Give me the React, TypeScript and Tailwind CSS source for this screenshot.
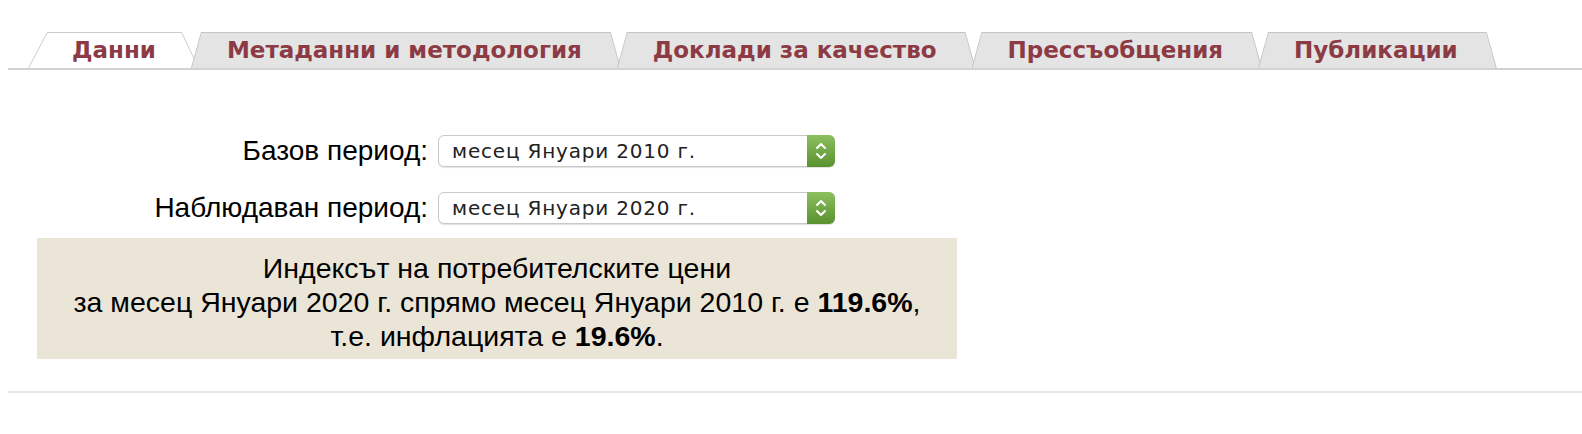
import React from 'react';

const tabs = [
  { label: 'Данни', active: true },
  { label: 'Метаданни и методология', active: false },
  { label: 'Доклади за качество', active: false },
  { label: 'Прессъобщения', active: false },
  { label: 'Публикации', active: false },
];

function Tab({ label, active, first, second }: { label: string; active: boolean; first: boolean; second: boolean }) {
  const margin = first ? 'ml-[20px]' : second ? '-ml-[8px]' : '-ml-[4px]';
  if (active) {
    return (
      <div className={`relative flex h-[36px] items-center pl-[44px] pr-[43px] ${margin}`}>
        <span className="absolute inset-0 bg-[#cdcdcd] [clip-path:polygon(0_100%,19px_0,calc(100%_-_17px)_0,100%_100%)]" />
        <span className="absolute inset-0 bg-white [clip-path:polygon(1px_100%,19.5px_1px,calc(100%_-_17.5px)_1px,calc(100%_-_1px)_100%)]" />
        <span className="relative">{label}</span>
      </div>
    );
  }
  return (
    <div className={`relative flex h-[36px] items-center pl-[36px] pr-[39px] ${margin}`}>
      <span className="absolute inset-0 bg-[#c4c4c4] [clip-path:polygon(0_100%,10px_0,calc(100%_-_10px)_0,100%_100%)]" />
      <span className="absolute inset-0 bg-[#e4e4e4] [clip-path:polygon(1px_100%,10.5px_1px,calc(100%_-_10.5px)_1px,calc(100%_-_1px)_100%)]" />
      <span className="relative">{label}</span>
    </div>
  );
}

function FakeSelect({ value }: { value: string }) {
  return (
    <div className="flex h-[32px] w-[397px] items-stretch rounded-[6px] border border-[#c9c9c9] bg-white shadow-[0_1px_1px_rgba(0,0,0,0.12)]">
      <div className="flex flex-1 items-center pl-[13px] font-['DejaVu_Sans',Verdana,sans-serif] text-[20px] tracking-[0.8px] text-[#222]">
        {value}
      </div>
      <div className="-my-px -mr-px flex w-[28px] items-center justify-center rounded-r-[6px] bg-gradient-to-b from-[#8cc05f] to-[#5a922f]">
        <svg width="12" height="20" viewBox="0 0 12 20" fill="none" stroke="white" strokeWidth="2" strokeLinecap="round" strokeLinejoin="round">
          <polyline points="2,7 6,3 10,7" />
          <polyline points="2,13 6,17 10,13" />
        </svg>
      </div>
    </div>
  );
}

export default function App() {
  return (
    <div className="min-h-[434px] w-full bg-white pt-[32px] font-['Liberation_Sans',Arial,sans-serif] text-black">
      {/* Tabs */}
      <div className="ml-[8px] flex border-b-2 border-[#d2d2d2] font-['DejaVu_Sans',Verdana,sans-serif] text-[23px] font-bold text-[#8c3b45]">
        {tabs.map((t, i) => (
          <Tab key={t.label} label={t.label} active={t.active} first={i === 0} second={i === 1} />
        ))}
      </div>

      {/* Form */}
      <div className="mt-[65px] flex flex-col gap-[25px]">
        <div className="flex items-center gap-[10px]">
          <div className="w-[428px] text-right text-[28px] leading-none">Базов период:</div>
          <FakeSelect value="месец Януари 2010 г." />
        </div>
        <div className="flex items-center gap-[10px]">
          <div className="w-[428px] text-right text-[28px] leading-none">Наблюдаван период:</div>
          <FakeSelect value="месец Януари 2020 г." />
        </div>
      </div>

      {/* Result */}
      <div className="ml-[37px] mt-[14px] h-[121px] w-[920px] bg-[#ebe5d8] pt-[13px] text-center text-[28.5px] leading-[34px]">
        <div>Индексът на потребителските цени</div>
        <div>
          за месец Януари 2020 г. спрямо месец Януари 2010 г. е <b>119.6%</b>,
        </div>
        <div>
          т.е. инфлацията е <b>19.6%</b>.
        </div>
      </div>

      <div className="ml-[8px] mt-[32px] border-t-2 border-[#e6e6e6]" />
    </div>
  );
}
